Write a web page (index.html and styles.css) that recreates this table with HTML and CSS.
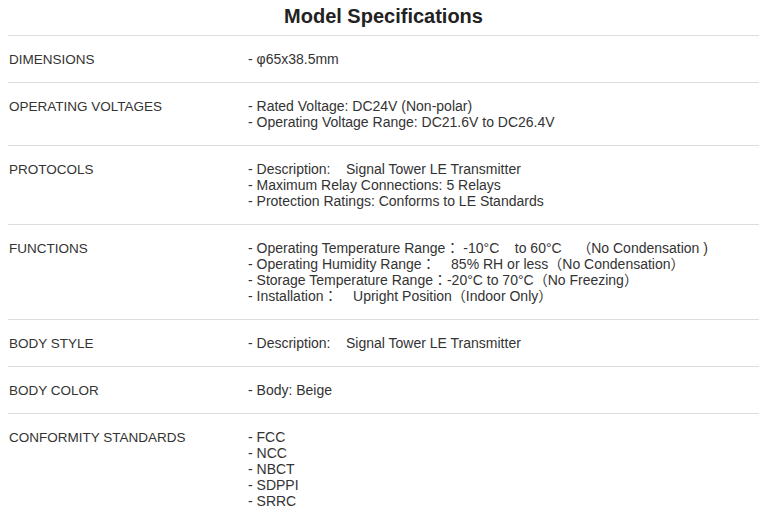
FILE: index.html
```html
<!DOCTYPE html>
<html>
<head>
<meta charset="utf-8">
<link rel="stylesheet" href="styles.css">
</head>
<body>
<div class="page">
  <h2 class="title">Model Specifications</h2>
  <div class="specs">
    <div class="row">
      <div class="label">DIMENSIONS</div>
      <div class="value">- φ65x38.5mm</div>
    </div>
    <div class="row">
      <div class="label">OPERATING VOLTAGES</div>
      <div class="value">- Rated Voltage: DC24V (Non-polar)<br>- Operating Voltage Range: DC21.6V to DC26.4V</div>
    </div>
    <div class="row">
      <div class="label">PROTOCOLS</div>
      <div class="value">- Description: &nbsp;&nbsp;&nbsp;Signal Tower LE Transmitter<br>- Maximum Relay Connections: 5 Relays<br>- Protection Ratings: Conforms to LE Standards</div>
    </div>
    <div class="row">
      <div class="label">FUNCTIONS</div>
      <div class="value">- Operating Temperature Range： -10°C &nbsp;&nbsp;&nbsp;to 60°C &nbsp;&nbsp;&nbsp;（No Condensation )<br>- Operating Humidity Range： &nbsp;&nbsp;&nbsp;85% RH or less（No Condensation）<br>- Storage Temperature Range：-20°C to 70°C（No Freezing）<br>- Installation： &nbsp;&nbsp;&nbsp;Upright Position（Indoor Only）</div>
    </div>
    <div class="row">
      <div class="label">BODY STYLE</div>
      <div class="value">- Description: &nbsp;&nbsp;&nbsp;Signal Tower LE Transmitter</div>
    </div>
    <div class="row">
      <div class="label">BODY COLOR</div>
      <div class="value">- Body: Beige</div>
    </div>
    <div class="row">
      <div class="label">CONFORMITY STANDARDS</div>
      <div class="value">- FCC<br>- NCC<br>- NBCT<br>- SDPPI<br>- SRRC</div>
    </div>
  </div>
</div>
</body>
</html>
```

FILE: styles.css
```css
html, body {
  margin: 0;
  padding: 0;
  background: #fff;
}
.page {
  padding-left: 8px;
  font-family: "Liberation Sans", Arial, "Noto Sans CJK JP", sans-serif;
  color: #333;
}
.title {
  margin: 0;
  padding-top: 4px;
  height: 31px;
  font-size: 20px;
  line-height: 24px;
  font-weight: bold;
  text-align: center;
  color: #222;
}
.specs {
  border-top: 1px solid #ddd;
}
.row {
  display: grid;
  grid-template-columns: 240px 1fr;
  align-items: start;
  padding: 15px 0;
  border-bottom: 1px solid #ddd;
  line-height: 16px;
}
.label {
  padding-left: 1px;
  padding-top: 1px;
  margin-bottom: -1px;
  font-size: 13.5px;
}
.value {
  font-size: 14px;
}
```
